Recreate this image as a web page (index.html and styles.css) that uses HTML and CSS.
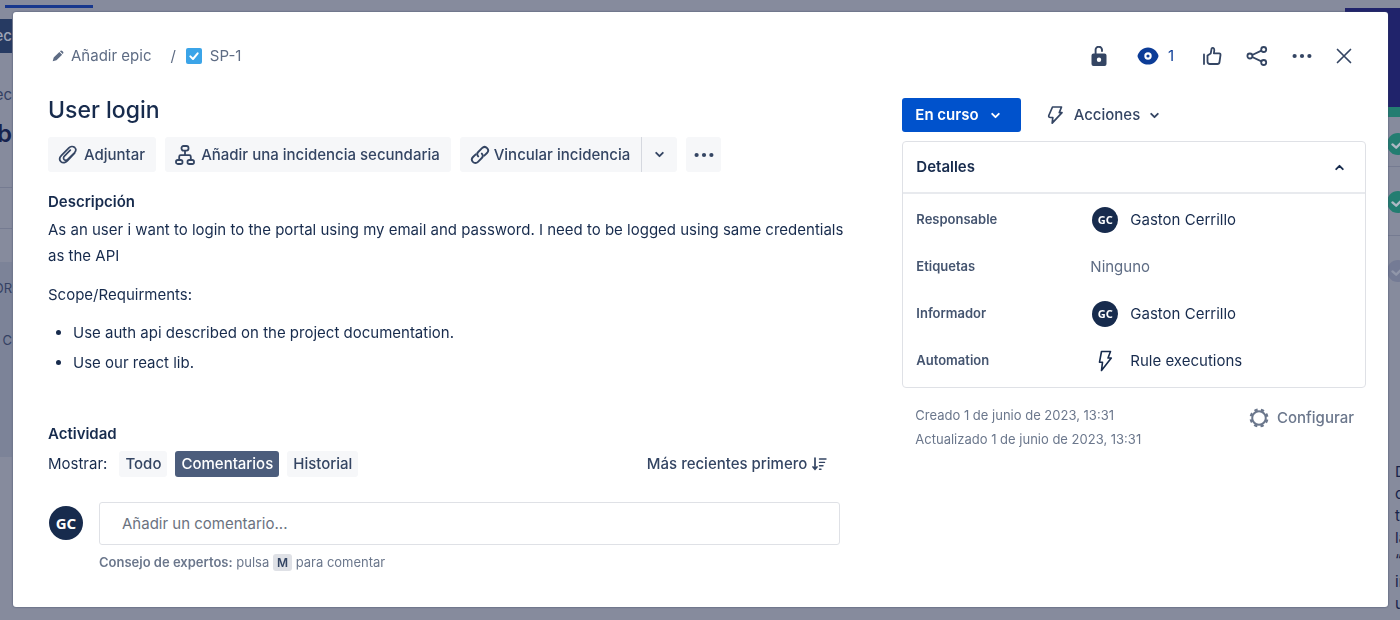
FILE: index.html
```html
<!DOCTYPE html>
<html lang="es">
<head>
<meta charset="utf-8">
<title>SP-1 User login</title>
<link rel="stylesheet" href="styles.css">
</head>
<body>
<svg class="sprite" aria-hidden="true">
  <symbol id="chevron" viewBox="0 0 10 10"><path d="M2 3.5 5 6.5 8 3.5" fill="none" stroke="currentColor" stroke-width="1.700" stroke-linecap="round" stroke-linejoin="round"/></symbol>
  <symbol id="dots" viewBox="0 0 20 20"><circle cx="2.6" cy="10" r="2.1"/><circle cx="10" cy="10" r="2.1"/><circle cx="17.4" cy="10" r="2.1"/></symbol>
  <symbol id="check" viewBox="0 0 24 24"><path d="M6 12.5 10 16 17.5 8.500" fill="none" stroke="currentColor" stroke-width="2.6" stroke-linecap="round" stroke-linejoin="round"/></symbol>
</svg>

<div class="backdrop" aria-hidden="true">
  <div class="board-left">
    <div class="tab-line"></div>
    <div class="rail-item rail-button">ec</div>
    <div class="rail-item rail-crumb">rec</div>
    <div class="rail-item rail-title">b</div>
    <div class="rail-item rail-row"></div>
    <div class="rail-item rail-row rail-row-last"></div>
    <div class="rail-column"><div class="rail-item rail-head">OR</div><div class="rail-item rail-count">- C</div></div>
  </div>
  <div class="board-right">
    <div class="banner"></div>
    <div class="rail-checks">
      <div class="rail-cell"><svg class="badge"><use href="#check"/></svg></div>
      <div class="rail-cell"><svg class="badge"><use href="#check"/></svg></div>
      <div class="rail-cell rail-cell-open"><svg class="badge badge-muted"><use href="#check"/></svg></div>
    </div>
    <div class="rail-text">D<br>c<br>t<br>la<br>“<br>in<br>u</div>
  </div>
</div>

<main class="dialog" role="dialog" aria-labelledby="issue-title">
  <header class="dialog-header">
    <nav class="crumbs">
      <button class="crumb" type="button">
        <svg class="pencil" viewBox="0 0 14 14"><path d="M.8 13.200 2 8.800 8.600 2.200 11.800 5.400 5.200 12Z M9.300 1.500 10 .9Q11 .2 12 1.100L12.900 2Q13.800 3 13 4L12.500 4.700Z" fill="currentColor"/></svg>
        Añadir epic
      </button>
      <span class="slash">/</span>
      <a class="crumb" href="#">
        <svg class="task" viewBox="0 0 24 24"><rect width="24" height="24" rx="3" fill="#3ba4e8"/><path d="M6.500 12.500 10.500 16.500 17.500 8" fill="none" stroke="#fff" stroke-width="3" stroke-linecap="round" stroke-linejoin="round"/></svg>
        SP-1
      </a>
    </nav>
    <div class="tools">
      <button class="tool" type="button" aria-label="Bloquear"><svg class="icon20" viewBox="0 0 20 20"><path d="M6.600 9V4.200a3.200 3.200 0 0 1 6.400-.6V5" fill="none" stroke="currentColor" stroke-width="1.900" stroke-linecap="round"/><path fill-rule="evenodd" d="M4.500 7.500h11a2 2 0 0 1 2 2v8.500a2 2 0 0 1-2 2h-11a2 2 0 0 1-2-2v-8.500a2 2 0 0 1 2-2Zm5.500 4a2.200 2.200 0 1 0 0 4.400 2.200 2.200 0 0 0 0-4.400Z" fill="currentColor"/></svg></button>
      <button class="tool tool-watch" type="button" aria-label="Observadores 1"><svg class="eye" viewBox="0 0 22 18"><path d="M11 .5C16.500.500 20 4.500 21.300 8.100Q21.600 9 21.300 9.900C20 13.500 16.500 17.500 11 17.500S2 13.500.700 9.900Q.4 9 .7 8.100C2 4.500 5.500.5 11 .5Z"/><circle cx="11" cy="9" r="3.700" fill="#fff"/><circle cx="11" cy="9" r="1.600"/></svg>1</button>
      <button class="tool" type="button" aria-label="Votar"><svg class="icon20" viewBox="0 0 20 20" fill="none" stroke="currentColor" stroke-width="1.800" stroke-linecap="round" stroke-linejoin="round"><path d="M2 8.500V18M5.500 9.500 8.700 7.500 9.600 2.600C9.800 1.600 12.300 1.500 12.300 4L11.900 7.300H17.200Q18.700 7.300 18.500 9L17.500 16Q17.200 18 15.500 18H8Q5.500 18 5.500 15.500Z"/></svg></button>
      <button class="tool" type="button" aria-label="Compartir"><svg class="icon22" viewBox="0 0 22 22" fill="none" stroke="currentColor" stroke-width="1.800"><circle cx="3.900" cy="11" r="2.500"/><circle cx="17.700" cy="4.500" r="2.500"/><circle cx="17.700" cy="17.500" r="2.500"/><path d="M6.200 10 15.400 5.600M6.200 12 15.400 16.400"/></svg></button>
      <button class="tool" type="button" aria-label="Más"><svg class="icon20"><use href="#dots"/></svg></button>
      <button class="tool" type="button" aria-label="Cerrar"><svg class="icon16" viewBox="0 0 16 16"><path d="M1.500 1.500 14.500 14.500M14.500 1.500 1.500 14.500" fill="none" stroke="currentColor" stroke-width="1.700" stroke-linecap="round"/></svg></button>
    </div>
  </header>

  <div class="columns">
    <section class="issue">
      <h1 class="title" id="issue-title">User login</h1>
      <div class="actions">
        <button class="btn" type="button"><svg class="icon20" viewBox="0 0 20 20"><path d="M16.600 8.200 9.300 15.800C7.700 17.500 5 18.600 2.900 16.600.900 14.600 1.900 12 3.500 10.400L10.900 2.900C12.400 1.400 14.900.900 16.700 2.500 18.500 4.200 17.800 6.300 16.400 7.800L9.800 14.400C8.900 15.300 7.400 15.700 6.200 14.600 5.100 13.500 5.500 12 6.400 11.100L12.300 5.200" fill="none" stroke="currentColor" stroke-width="1.700" stroke-linecap="round"/></svg>Adjuntar</button>
        <button class="btn" type="button"><svg class="icon20" viewBox="0 0 20 20" fill="none" stroke="currentColor" stroke-width="1.800"><rect x="6.500" y="1" width="7" height="4.600" rx="2"/><rect x="1" y="15" width="6.500" height="4" rx="1.800"/><rect x="12.500" y="15" width="6.500" height="4" rx="1.800"/><path d="M10 5.600V10.200M4.200 15V11.700Q4.200 10.200 5.700 10.200H14.300Q15.800 10.200 15.800 11.700V15"/></svg>Añadir una incidencia secundaria</button>
        <div class="split">
          <button class="btn" type="button"><svg class="icon20" viewBox="0 0 20 20" fill="none" stroke="currentColor" stroke-width="1.900" stroke-linecap="round"><path d="M8.200 11.400C6.800 9.800 7 8.200 8.200 7L12 3.200C13.500 1.700 15.700 1.700 17.100 3.100 18.400 4.500 18.400 6.600 17 8L14.300 10.700"/><path d="M11.800 8.600C13.200 10.200 13 11.800 11.800 13L8 16.800C6.500 18.300 4.300 18.300 2.900 16.900 1.600 15.500 1.600 13.400 3 12L5.700 9.300"/></svg>Vincular incidencia</button>
          <button class="btn btn-arrow" type="button" aria-label="Más opciones de vínculo"><svg class="icon12"><use href="#chevron"/></svg></button>
        </div>
        <button class="btn btn-dots" type="button" aria-label="Más acciones"><svg class="icon20"><use href="#dots"/></svg></button>
      </div>

      <h2 class="heading">Descripción</h2>
      <div class="description">
        <p>As an user i want to login to the portal using my email and password. I need to be logged using same credentials as the API</p>
        <p>Scope/Requirments:</p>
        <ul>
          <li>Use auth api described on the project documentation.</li>
          <li>Use our react lib.</li>
        </ul>
      </div>

      <h2 class="heading heading-activity">Actividad</h2>
      <div class="filters">
        <span class="filters-label">Mostrar:</span>
        <button class="chip" type="button">Todo</button>
        <button class="chip chip-on" type="button" aria-pressed="true">Comentarios</button>
        <button class="chip" type="button">Historial</button>
        <button class="sort" type="button">Más recientes primero
          <svg class="icon16" viewBox="0 0 16 16" fill="none" stroke="currentColor" stroke-width="1.700" stroke-linecap="round"><path d="M4 2V13M2 11 4 13.300 6 11"/><path d="M8.500 3H15M8.500 6.400H13.500M8.500 9.800H12M8.500 13.200H10" stroke-width="1.400"/></svg>
        </button>
      </div>
      <div class="comment">
        <span class="avatar avatar-large">GC</span>
        <div class="comment-body">
          <input class="comment-input" type="text" aria-label="Añadir un comentario" placeholder="Añadir un comentario...">
          <p class="tip"><b>Consejo de expertos:</b> pulsa <kbd>M</kbd> para comentar</p>
        </div>
      </div>
    </section>

    <aside class="side">
      <div class="status-row">
        <button class="status" type="button">En curso <svg class="icon12"><use href="#chevron"/></svg></button>
        <button class="automate" type="button"><svg class="icon20" viewBox="0 0 20 20"><path d="M7.500 2H16.500L14.300 7.600H17L7.200 18.200 7.800 12.500H5.500Q3.300 12.500 3.800 10.500Z" fill="none" stroke="currentColor" stroke-width="1.700" stroke-linejoin="round"/></svg>Acciones <svg class="icon12"><use href="#chevron"/></svg></button>
      </div>
      <div class="details">
        <button class="details-head" type="button" aria-expanded="true">Detalles <svg class="icon12 flip"><use href="#chevron"/></svg></button>
        <dl class="fields">
          <dt>Responsable</dt><dd><span class="avatar">GC</span>Gaston Cerrillo</dd>
          <dt>Etiquetas</dt><dd class="none">Ninguno</dd>
          <dt>Informador</dt><dd><span class="avatar">GC</span>Gaston Cerrillo</dd>
          <dt>Automation</dt><dd><svg class="bolt" viewBox="0 0 26 22"><path d="M9.500 1.500H18.500L16 8H19.300L9.500 20.500 10.500 12.200H7.500Z" fill="none" stroke="currentColor" stroke-width="1.600" stroke-linejoin="round"/></svg>Rule executions</dd>
        </dl>
      </div>
      <footer class="meta">
        <p class="dates">Creado 1 de junio de 2023, 13:31<br>Actualizado 1 de junio de 2023, 13:31</p>
        <button class="configure" type="button"><svg class="icon20" viewBox="0 0 20 20" fill="none" stroke="currentColor"><circle cx="10" cy="10" r="6.800" stroke-width="2"/><circle cx="10" cy="10" r="8.300" stroke-width="2.400" stroke-dasharray="3.260 3.260" stroke-dashoffset="-1.630"/></svg>Configurar</button>
      </footer>
    </aside>
  </div>
</main>
</body>
</html>
```
FILE: styles.css
```css
* { box-sizing: border-box; }
body {
  margin: 0;
  padding: 12px 12px 13px 13px;
  min-height: 100vh;
  display: flex;
  background: #868b9d;
  color: #172b4d;
  font: 15px/20px Inter, "Liberation Sans", sans-serif;
}
h1, h2, p, ul, dl, dd { margin: 0; padding: 0; }
button { font: inherit; color: inherit; background: none; border: 0; padding: 0; cursor: pointer; }
a { color: inherit; text-decoration: none; }
svg { flex: none; }
svg:not([fill]) { fill: currentColor; }
.sprite { position: absolute; width: 0; height: 0; }
.icon12 { width: 11px; height: 11px; }
.icon16 { width: 16px; height: 16px; }
.icon20 { width: 20px; height: 20px; }
.icon22 { width: 22px; height: 22px; }

/* Dimmed board behind the dialog */
.backdrop { position: fixed; inset: 0; z-index: -1; display: flex; justify-content: space-between; overflow: hidden; background: #868b9d; }
.board-left { width: 93px; padding-top: 5px; color: #344163; }
.rail-item { width: 12px; display: flex; justify-content: flex-end; align-items: center; white-space: nowrap; }
.tab-line { height: 3px; margin-left: 5px; background: #17378d; }
.rail-button { height: 34px; margin-top: 11px; background: #263a62; color: #9da4b6; font-weight: 500; }
.rail-crumb { height: 20px; margin-top: 32px; }
.rail-title { height: 32px; margin-top: 13px; color: #16234f; font-size: 24px; font-weight: 600; }
.rail-row { height: 38px; border-bottom: 1px solid #757b91; }
.rail-row-last { height: 41px; }
.rail-column { width: 12px; height: 195px; margin-top: 33px; padding-top: 16px; background: #7c8398; font-size: 13px; }
.rail-count { margin-top: 32px; }
.board-right { width: 55px; padding-top: 8px; }
.banner { height: 109px; background: #20236b; border-bottom: 10px solid #237d71; }
.rail-checks { margin-left: 42px; color: #aeb9c4; }
.rail-cell { height: 50px; padding-top: 16px; border-bottom: 1px solid #757b91; }
.rail-cell + .rail-cell { height: 69px; padding-top: 24px; }
.rail-cell.rail-cell-open { border: 0; }
.badge { display: block; width: 22px; height: 22px; border-radius: 11px; background: #237d71; }
.badge-muted { background: #747b95; color: #9096a9; }
.rail-text { margin: 156px 0 0 50px; color: #172349; line-height: 22px; white-space: nowrap; }

/* Dialog */
.dialog { flex: 1; min-width: 0; padding: 28px 22px 24px 35px; background: #fff; border-radius: 3px; box-shadow: 0 0 2px #3b4665; }
.dialog-header { display: flex; justify-content: space-between; align-items: center; height: 32px; }
.crumbs { display: flex; align-items: center; color: #5e6c84; }
.crumb { display: flex; align-items: center; gap: 8px; }
.pencil { width: 12px; height: 12px; margin-left: 4px; margin-right: -1px; }
.task { width: 16px; height: 16px; }
.slash { margin: 0 10px 0 19px; }
.tools { display: flex; align-items: center; gap: 24px; padding-right: 14px; color: #344563; }
.tool { display: flex; align-items: center; min-height: 32px; }
.tool-watch { gap: 9px; margin: 0 4px; color: #0c3c97; }
.eye { width: 22px; height: 18px; }
.columns { display: grid; grid-template-columns: minmax(0, 1256fr) minmax(0, 735fr); gap: 62px; }

.title { margin-top: 22px; font-size: 23px; line-height: 32px; font-weight: 500; }
.actions { display: flex; gap: 9px; margin-top: 11px; }
.btn { display: flex; align-items: center; justify-content: center; gap: 6px; height: 35px; padding: 0 11px 0 10px; border-radius: 3px; background: #f6f7f9; color: #344563; font-weight: 500; white-space: nowrap; }
.split { display: flex; }
.split .btn:first-child { gap: 4px; border-radius: 3px 0 0 3px; border-right: 1px solid #d5d8df; }
.split .btn-arrow, .btn-dots { width: 35px; padding: 0; }
.btn-arrow { border-radius: 0 3px 3px 0; }
.heading { margin-top: 20px; font-size: 15px; line-height: 20px; font-weight: 600; }
.description { margin-top: 5px; margin-right: -16px; line-height: 26px; }
.description p + p { margin-top: 13px; }
.description ul { margin-top: 12px; padding-left: 25px; }
.description li + li { margin-top: 4px; }
.heading-activity { margin-top: 48px; }
.filters { display: flex; align-items: center; gap: 8px; margin-top: 7px; }
.filters-label { margin-right: 4px; }
.chip { height: 26px; padding: 0 6px; border-radius: 3px; background: #f6f7f9; color: #344563; font-weight: 500; }
.chip-on { background: #4c5d7c; color: #fff; }
.sort { display: flex; align-items: center; gap: 4px; margin-left: auto; margin-right: 13px; color: #344563; font-weight: 500; }
.comment { display: flex; gap: 16px; margin: 25px 0 0 1px; }
.comment-body { flex: 1; min-width: 0; }
.comment-input { display: block; width: 100%; height: 43px; padding: 0 22px; border: 1px solid #dfe1e6; border-radius: 3px; color: inherit; font: inherit; }
.comment-input::placeholder { color: #6b7280; opacity: 1; }
.tip { margin-top: 7px; color: #6b778c; font-size: 13px; line-height: 20px; }
.tip b { font-weight: 600; }
.tip kbd { display: inline-block; padding: 0 4px; border-radius: 3px; background: #dfe1e6; color: #344563; font: 600 12px/17px Inter, sans-serif; }
.avatar { display: inline-flex; flex: none; align-items: center; justify-content: center; width: 26px; height: 26px; border-radius: 50%; background: #172b4d; color: #fff; font: 700 11px/16px "Noto Sans", sans-serif; }
.avatar-large { width: 34px; height: 34px; margin-top: 4px; font-size: 15px; }

.status-row { display: flex; gap: 24px; margin-top: 26px; }
.status { display: flex; align-items: center; gap: 11px; height: 34px; padding: 0 20px 0 13px; border-radius: 3px; background: #0052cc; color: #fff; font-weight: 600; }
.automate { display: flex; align-items: center; gap: 9px; color: #344563; font-weight: 500; }
.details { margin-top: 9px; border: 1px solid #dfe1e6; border-radius: 4px; }
.details-head { display: flex; justify-content: space-between; align-items: center; width: 100%; height: 52px; padding: 0 20px 0 13px; border-bottom: 2px solid #e8eaee; font-weight: 600; }
.flip { transform: rotate(180deg); }
.fields { display: grid; grid-template-columns: 174px 1fr; grid-auto-rows: 47px; align-items: center; padding: 2px 13px 3px; }
.fields dt { padding-bottom: 2px; color: #44546f; font-size: 13px; font-weight: 600; }
.fields dd { display: flex; align-items: center; gap: 12px; margin-left: 2px; }
.fields .none { margin-left: 0; color: #5e6c84; }
.bolt { width: 26px; height: 22px; }
.meta { display: flex; justify-content: space-between; align-items: flex-start; padding: 15px 12px 0 13px; color: #6b778c; }
.dates { font-size: 13px; line-height: 24px; }
.configure { display: flex; align-items: center; gap: 8px; margin-top: 5px; font-weight: 500; }
```
